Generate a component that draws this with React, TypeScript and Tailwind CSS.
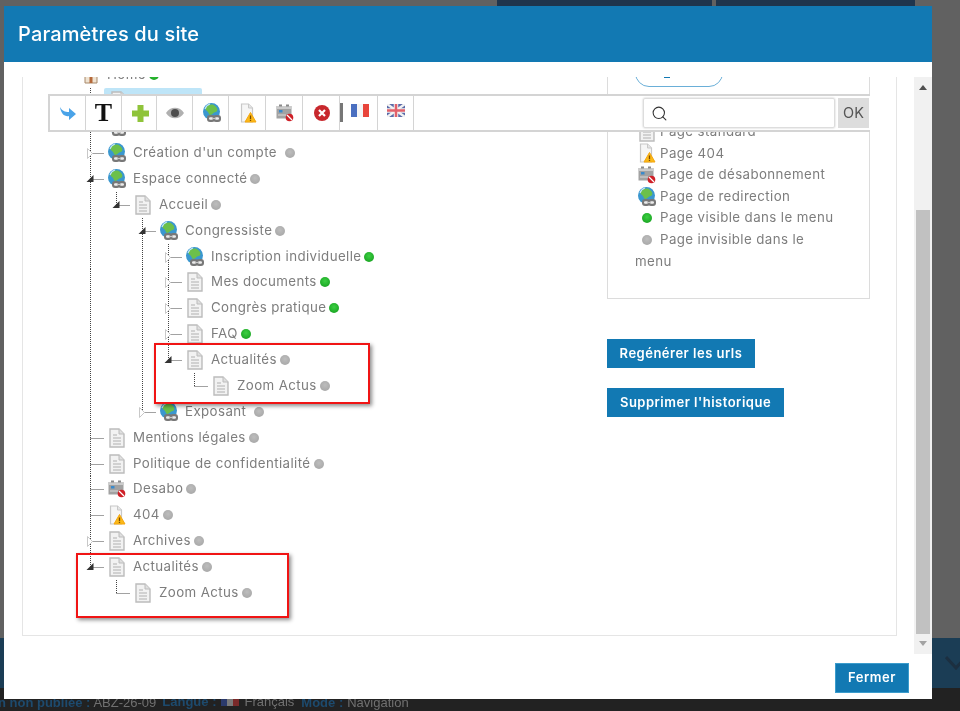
import React from 'react';
import { Search } from 'lucide-react';

type Line = 'pass' | 'none' | 'tee' | 'end';
type IconName = 'page' | 'globe' | 'warn' | 'unsub' | 'home';

type TreeRow = {
  label: string;
  lines: Line[];
  icon: IconName;
  dot: 'green' | 'gray';
  toggle?: 'open' | 'closed';
  wide?: boolean; // extra space before the dot
  selected?: boolean;
};

const PageIcon = () => (
  <svg width="18" height="20" viewBox="0 0 18 20" className="shrink-0">
    <path d="M2 1h9l5 5v13h-14z" fill="#f2f2f2" stroke="#bcbcbc" strokeWidth="1.400" />
    <path d="M11 1v5h5" fill="#dfdfdf" stroke="#bcbcbc" />
    <path d="M5 7h4M5 10h8M5 13h8M5 16h8" stroke="#c6c6c6" strokeWidth="1.400" />
  </svg>
);

const GlobeIcon = () => (
  <svg width="18" height="20" viewBox="0 0 18 20" className="shrink-0">
    <circle cx="8.500" cy="8.500" r="8.500" fill="#3a97cf" />
    <path d="M3 4c3-3 7-3 9-1 3 2 3 5 1 6-3 0-3 3-6 3-2-1-1-3-3-4-2-1-2-3-1-4z" fill="#6cc04a" />
    <path d="M2 6a7.500 7.500 0 0 1 5-5" stroke="#bfe4f6" strokeWidth="1.200" fill="none" />
    <rect x="4" y="12" width="8" height="7" rx="3" fill="#787878" />
    <rect x="10" y="12" width="8" height="7" rx="3" fill="#787878" />
    <rect x="6" y="14.300" width="4" height="2.400" rx="1.200" fill="#ececec" />
    <rect x="12" y="14.300" width="4" height="2.400" rx="1.200" fill="#ececec" />
    <path d="M9 15.500h4" stroke="#c8c8c8" strokeWidth="1.200" />
  </svg>
);

const WarnIcon = () => (
  <svg width="18" height="20" viewBox="0 0 18 20" className="shrink-0">
    <path d="M2.500 1h7l4 4v14h-11z" fill="#f6f6f6" stroke="#c8c8c8" strokeWidth="1.200" />
    <path d="M9.500 1v4h4" fill="#e6e6e6" stroke="#c8c8c8" />
    <path d="M11.500 9.500l5.500 9.500h-11z" fill="#fbb917" stroke="#f5a60f" strokeLinejoin="round" />
    <path d="M11.500 12.500v3.500M11.500 16.800v1.200" stroke="#7a4a00" strokeWidth="1.300" />
  </svg>
);

const UnsubIcon = () => (
  <svg width="18" height="18" viewBox="0 0 18 18" className="shrink-0">
    <rect x="0.500" y="2" width="15" height="12.500" fill="#a2a2a2" />
    <rect x="0.500" y="2" width="15" height="3" fill="#cbcbcb" />
    <rect x="3" y="0.500" width="3" height="2" fill="#8a8a8a" />
    <rect x="10" y="0.500" width="3" height="2" fill="#8a8a8a" />
    <rect x="3" y="6" width="3.500" height="2.500" fill="#3a8acb" />
    <path d="M2 11h8" stroke="#d8d8d8" />
    <circle cx="13.500" cy="13.500" r="3.800" fill="#cf2027" />
    <path d="M11 11l5 5" stroke="#ffffff" strokeWidth="1.200" />
  </svg>
);

const HomeIcon = () => (
  <svg width="18" height="18" viewBox="0 0 18 18" className="shrink-0">
    <path d="M3 8l6-6 6 6v9h-12z" fill="#efe3d2" stroke="#a8896b" />
    <path d="M7.500 11h3v6h-3z" fill="#b5693a" />
  </svg>
);

const TreeIcon = ({ name }: { name: IconName }) => {
  if (name === 'page') return <PageIcon />;
  if (name === 'globe') return <GlobeIcon />;
  if (name === 'warn') return <WarnIcon />;
  if (name === 'unsub') return <UnsubIcon />;
  return <HomeIcon />;
};

const Dot = ({ color }: { color: 'green' | 'gray' }) =>
  color === 'green' ? (
    <span className="block w-[10px] h-[10px] rounded-full shrink-0 bg-[radial-gradient(circle_at_50%_40%,#3ccf42,#119a1b)]" />
  ) : (
    <span className="block w-[10px] h-[10px] rounded-full shrink-0 bg-[radial-gradient(circle_at_50%_40%,#bdbdbd,#a3a3a3)]" />
  );

// one 26px wide tree guide cell, with the toggle arrow on the last one
const Guide = ({ line, toggle }: { line: Line; toggle?: 'open' | 'closed' }) => (
  <svg width="26" height="26" viewBox="0 0 26 26" className="shrink-0 overflow-visible">
    {(line === 'pass' || line === 'tee') && (
      <path d="M13.500 0v26" stroke="#444444" strokeDasharray="1 1" />
    )}
    {line === 'end' && <path d="M13.500 0v13" stroke="#444444" strokeDasharray="1 1" />}
    {(line === 'tee' || line === 'end') && (
      <path d="M13.500 13.500h13" stroke="#444444" strokeDasharray="1 1" />
    )}
    {toggle === 'open' && <path d="M16.500 9v7h-7z" fill="#333333" />}
    {toggle === 'closed' && (
      <path d="M10.500 8.500l5 5-5 5z" fill="#ffffff" stroke="#c8c8c8" />
    )}
  </svg>
);

const rows: TreeRow[] = [
  { label: 'Home', lines: [], icon: 'home', dot: 'green' },
  { label: 'Accueil', lines: ['tee'], icon: 'page', dot: 'green', selected: true },
  { label: 'Connexion', lines: ['tee'], icon: 'globe', dot: 'gray' },
  { label: "Création d'un compte", lines: ['tee'], icon: 'globe', dot: 'gray', toggle: 'closed', wide: true },
  { label: 'Espace connecté', lines: ['tee'], icon: 'globe', dot: 'gray', toggle: 'open' },
  { label: 'Accueil', lines: ['pass', 'end'], icon: 'page', dot: 'gray', toggle: 'open' },
  { label: 'Congressiste', lines: ['pass', 'none', 'tee'], icon: 'globe', dot: 'gray', toggle: 'open' },
  { label: 'Inscription individuelle', lines: ['pass', 'none', 'pass', 'tee'], icon: 'globe', dot: 'green', toggle: 'closed' },
  { label: 'Mes documents', lines: ['pass', 'none', 'pass', 'tee'], icon: 'page', dot: 'green', toggle: 'closed' },
  { label: 'Congrès pratique', lines: ['pass', 'none', 'pass', 'tee'], icon: 'page', dot: 'green', toggle: 'closed' },
  { label: 'FAQ', lines: ['pass', 'none', 'pass', 'tee'], icon: 'page', dot: 'green', toggle: 'closed' },
  { label: 'Actualités', lines: ['pass', 'none', 'pass', 'end'], icon: 'page', dot: 'gray', toggle: 'open' },
  { label: 'Zoom Actus', lines: ['pass', 'none', 'pass', 'none', 'end'], icon: 'page', dot: 'gray' },
  { label: 'Exposant', lines: ['pass', 'none', 'end'], icon: 'globe', dot: 'gray', toggle: 'closed', wide: true },
  { label: 'Mentions légales', lines: ['tee'], icon: 'page', dot: 'gray' },
  { label: 'Politique de confidentialité', lines: ['tee'], icon: 'page', dot: 'gray' },
  { label: 'Desabo', lines: ['tee'], icon: 'unsub', dot: 'gray' },
  { label: '404', lines: ['tee'], icon: 'warn', dot: 'gray' },
  { label: 'Archives', lines: ['tee'], icon: 'page', dot: 'gray', toggle: 'closed' },
  { label: 'Actualités', lines: ['end'], icon: 'page', dot: 'gray', toggle: 'open' },
  { label: 'Zoom Actus', lines: ['none', 'end'], icon: 'page', dot: 'gray' },
];

const LegendLine = ({ icon, children }: { icon: React.ReactNode; children: React.ReactNode }) => (
  <div className="flex items-center h-[21.67px]">
    <span className="flex w-[26px] h-[21px] items-center justify-center shrink-0">{icon}</span>
    {children}
  </div>
);

const ToolCell = ({ className, children }: { className: string; children: React.ReactNode }) => (
  <div className={`flex items-center justify-center border-r border-[#d4d4d4] h-full shrink-0 ${className}`}>
    {children}
  </div>
);

const App: React.FC = () => {
  return (
    <div className="relative w-[960px] h-[711px] overflow-hidden bg-[#616161] flex flex-col blur-[0.35px] font-['Inter',sans-serif]">
      {/* page behind the dialog */}
      <div className="flex h-[638px] pl-[497px] gap-[4px]">
        <div className="w-[215px] h-[6px] bg-[#1f354d]" />
        <div className="w-[199px] h-[6px] bg-[#1f354d]" />
      </div>
      <div className="flex justify-end items-start h-[50px] bg-[#1b3d55] pt-[18px]">
        <svg width="15" height="14" viewBox="0 0 15 14">
          <path d="M1 1l10 11 10-11" fill="none" stroke="#1c2f40" strokeWidth="3" />
        </svg>
      </div>
      <div className="flex-1 bg-[#222222] flex items-end text-[13px] leading-[16px] font-['Liberation_Sans',sans-serif] whitespace-nowrap">
        <span className="font-bold text-[#1d4a6d] -ml-[2px]">n non publiée :</span>
        <span className="ml-[3px] text-[#707070]">ABZ-26-09</span>
        <span className="ml-[6px] font-bold text-[#1d4a6d] mb-px">Langue :</span>
        <span className="ml-[5px] mb-[5px] flex w-[18px] h-[8px]">
          <span className="flex-1 bg-[#2b3a6b]" />
          <span className="flex-1 bg-[#7a7a7a]" />
          <span className="flex-1 bg-[#7a2a2a]" />
        </span>
        <span className="ml-[5px] text-[#707070] mb-px">Français</span>
        <span className="ml-[7px] font-bold text-[#1d4a6d]">Mode :</span>
        <span className="ml-[4px] text-[#707070]">Navigation</span>
      </div>

      {/* dialog */}
      <div className="absolute left-[4px] top-[6px] w-[928px] h-[693px] bg-white flex flex-col">
        <div className="h-[56px] shrink-0 bg-[#1279b3] flex items-center pl-[14px]">
          <h1 className="text-[20px] font-medium tracking-[0.15px] text-white">Paramètres du site</h1>
        </div>

        <div className="pt-[15px] flex h-[592px] shrink-0">
          <div className="w-[910px] h-[577px] overflow-hidden pl-[18px]">
            <div className="-mt-[36px] h-[595px] w-[875px] border-l border-r border-b border-[#e5e5e5] flex text-[13.3px] text-[#7d7d7d] tracking-[0.4px]">
              <div className="relative w-[584px] pl-[54px] pt-[21.5px]">
                {rows.map((row, i) => (
                  <div key={i} className="flex items-center h-[25.88px] whitespace-nowrap">
                    {row.lines.map((line, j) => (
                      <Guide key={j} line={line} toggle={j === row.lines.length - 1 ? row.toggle : undefined} />
                    ))}
                    {row.selected ? (
                      <div className="ml-[1px] flex items-center h-[26px] w-[98px] pl-[6px] bg-[#bee5f8] rounded-[2px]">
                        <TreeIcon name={row.icon} />
                      </div>
                    ) : (
                      <>
                        <div className="ml-[5px] w-[18px] flex justify-center">
                          <TreeIcon name={row.icon} />
                        </div>
                        <span className="ml-[7px]">{row.label}</span>
                        <span className={row.wide ? 'ml-[8px]' : 'ml-[3px]'}>
                          <Dot color={row.dot} />
                        </span>
                      </>
                    )}
                  </div>
                ))}
                {/* red annotation boxes */}
                <div className="absolute left-[131px] top-[302px] w-[216px] h-[61px] border-2 border-[#f01414] shadow-[2px_2px_4px_rgba(0,0,0,0.45)]" />
                <div className="absolute left-[53px] top-[512px] w-[213px] h-[65px] border-2 border-[#f01414] shadow-[2px_2px_4px_rgba(0,0,0,0.45)]" />
              </div>

              <div className="w-[263px]">
                <div className="border border-t-0 border-[#dcdcdc] h-[258px] pl-[27px] pt-[16px]">
                  <div className="w-[88px] h-[30px] rounded-[14px] border border-[#6aafd8] flex items-end pl-[28px]">
                    <span className="w-[6px] h-[2px] mb-[8px] bg-[#1279b3]" />
                  </div>
                  <div className="mt-[34px] -ml-px">
                    <LegendLine icon={<PageIcon />}>Page standard</LegendLine>
                    <LegendLine icon={<WarnIcon />}>Page 404</LegendLine>
                    <LegendLine icon={<UnsubIcon />}>Page de désabonnement</LegendLine>
                    <LegendLine icon={<GlobeIcon />}>Page de redirection</LegendLine>
                    <LegendLine icon={<Dot color="green" />}>Page visible dans le menu</LegendLine>
                    <LegendLine icon={<Dot color="gray" />}>Page invisible dans le</LegendLine>
                    <div className="h-[21.67px] leading-[21.67px] ml-px">menu</div>
                  </div>
                </div>
                <div className="mt-[40px] flex flex-col items-start gap-[20px] text-[13px] font-semibold tracking-[0.5px] text-white">
                  <button className="h-[29px] w-[148px] bg-[#1279b3]">Regénérer les urls</button>
                  <button className="h-[29px] w-[177px] bg-[#1279b3]">Supprimer l'historique</button>
                </div>
              </div>
            </div>
          </div>

          {/* scrollbar */}
          <div className="w-[18px] h-[577px] bg-[#f1f1f1] flex flex-col items-center">
            <svg width="8" height="5" viewBox="0 0 8 5" className="mt-[8px]">
              <path d="M4 0l4 5h-8z" fill="#505050" />
            </svg>
            <div className="w-[14px] h-[424px] mt-[120px] bg-[#c1c1c1]" />
            <svg width="8" height="5" viewBox="0 0 8 5" className="mt-[7px]">
              <path d="M0 0h8l-4 5z" fill="#a3a3a3" />
            </svg>
          </div>
        </div>

        <div className="flex justify-end pr-[23px] pt-[9px]">
          <button className="w-[74px] h-[30px] bg-[#1279b3] border border-[#3b9ccc] text-white text-[13px] font-semibold tracking-[0.5px]">
            Fermer
          </button>
        </div>

        {/* toolbar floating over the tree */}
        <div className="absolute left-[44px] top-[88px] w-[822px] h-[38px] bg-white border-y-2 border-[#d4d4d4] flex items-center">
          <div className="flex items-center h-full border-l-2 border-[#d4d4d4]">
            <ToolCell className="w-[36px]">
              <svg width="18" height="16" viewBox="0 0 18 16">
                <path d="M1 2c2 4 5 5 9 5V3l7 6-7 6v-4C6 12 2 9 1 2z" fill="#4aa3e8" />
              </svg>
            </ToolCell>
            <ToolCell className="w-[36px]">
              <span className="font-['Liberation_Serif',serif] font-bold text-[26px] text-[#111111] leading-none">T</span>
            </ToolCell>
            <ToolCell className="w-[35px]">
              <svg width="17" height="17" viewBox="0 0 17 17" className="ml-[2px]">
                <path d="M5.500 0h6v5.500h5.500v6h-5.500v5.500h-6v-5.500h-5.500v-6h5.500z" fill="#8fc43a" />
              </svg>
            </ToolCell>
            <ToolCell className="w-[36px]">
              <svg width="18" height="12" viewBox="0 0 18 12">
                <path d="M0 6c4-7 14-7 18 0-4 7-14 7-18 0z" fill="#b0b0b0" />
                <circle cx="9" cy="6" r="4" fill="#4d4d4d" />
              </svg>
            </ToolCell>
            <ToolCell className="w-[36px]">
              <span className="ml-[2px]">
                <GlobeIcon />
              </span>
            </ToolCell>
            <ToolCell className="w-[37px]">
              <span className="ml-[2px]">
                <WarnIcon />
              </span>
            </ToolCell>
            <ToolCell className="w-[37px]">
              <span className="ml-[2px]">
                <UnsubIcon />
              </span>
            </ToolCell>
            <ToolCell className="w-[37px]">
              <svg width="16" height="16" viewBox="0 0 16 16" className="ml-[2px]">
                <circle cx="8" cy="8" r="8" fill="#c8282d" />
                <path d="M5 5l6 6M11 5l-6 6" stroke="#ffffff" strokeWidth="2.200" />
              </svg>
            </ToolCell>
          </div>
          <div className="w-[3px] h-[19px] bg-[#777777] -mt-[1px]" />
          <div className="flex items-center h-full">
            <ToolCell className="w-[35px]">
              <div className="flex w-[18px] h-[13px] -mt-[5px]">
                <span className="flex-1 bg-[#4a6fc0]" />
                <span className="flex-1 bg-[#f5f5f5]" />
                <span className="flex-1 bg-[#e8453b]" />
              </div>
            </ToolCell>
            <ToolCell className="w-[36px]">
              <svg width="18" height="13" viewBox="0 0 18 13" className="-mt-[5px]">
                <rect width="18" height="13" fill="#5a6aa8" />
                <path d="M0 0l18 13M18 0l-18 13" stroke="#f2f2f2" strokeWidth="2.500" />
                <path d="M9 0v13M0 6.500h18" stroke="#f2f2f2" strokeWidth="4.500" />
                <path d="M9 0v13M0 6.500h18" stroke="#e2606a" strokeWidth="2.500" />
              </svg>
            </ToolCell>
          </div>
          <div className="flex-1" />
          <div className="flex items-center w-[192px] h-[30px] rounded-[2px] border border-[#dddddd] shadow-[0_0_2px_rgba(0,0,0,0.25)] pl-[7px]">
            <Search size={17} strokeWidth={1.500} className="text-[#333333]" />
          </div>
          <div className="ml-[3px] w-[31px] h-[30px] mr-px bg-[#dddddd] flex items-center justify-center text-[14.500px] text-[#555555]">
            OK
          </div>
        </div>
      </div>
    </div>
  );
};

export default App;
